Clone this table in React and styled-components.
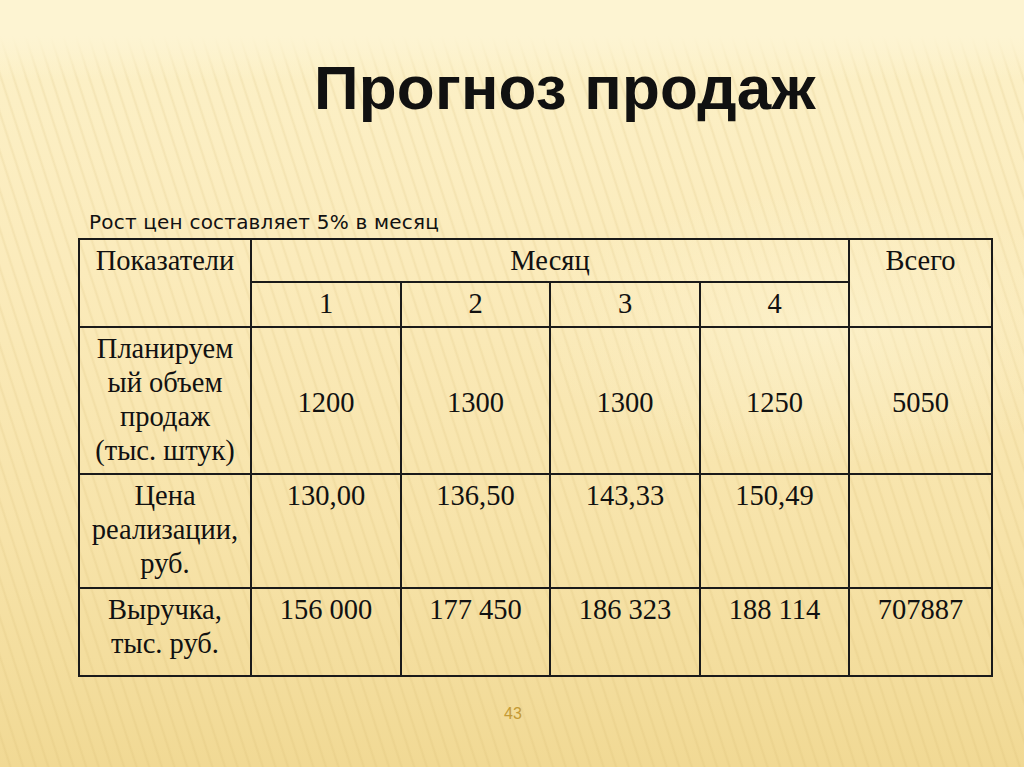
import styled, { createGlobalStyle } from "styled-components"

const GlobalStyle = createGlobalStyle`
  html, body {
    margin: 0;
    padding: 0;
  }
  body {
    background: #fbeec2;
  }
`

const months = ["1", "2", "3", "4"]

const rows = [
  {
    label: ["Планируем", "ый объем", "продаж", "(тыс. штук)"],
    values: ["1200", "1300", "1300", "1250"],
    total: "5050",
    middle: true,
  },
  {
    label: ["Цена", "реализации,", "руб."],
    values: ["130,00", "136,50", "143,33", "150,49"],
    total: "",
  },
  {
    label: ["Выручка,", "тыс. руб."],
    values: ["156 000", "177 450", "186 323", "188 114"],
    total: "707887",
  },
]

const App = () => {
  return (
    <Slide>
      <GlobalStyle />
      <Title>Прогноз продаж</Title>
      <Note>Рост цен составляет 5% в месяц</Note>

      <Table>
        <colgroup>
          <col style={{ width: 172 }} />
          <col style={{ width: 150 }} />
          <col style={{ width: 149 }} />
          <col style={{ width: 150 }} />
          <col style={{ width: 149 }} />
          <col style={{ width: 143 }} />
        </colgroup>
        <tbody>
          <Row h={43}>
            <Cell rowSpan={2}>Показатели</Cell>
            <Cell colSpan={4}>Месяц</Cell>
            <Cell rowSpan={2}>Всего</Cell>
          </Row>
          <Row h={45}>
            {months.map(m => <Cell key={m}>{m}</Cell>)}
          </Row>
          {rows.map((r, i) => (
            <Row key={i} h={[147, 114, 88][i]}>
              <Cell>{r.label.map((l, j) => <Line key={j}>{l}</Line>)}</Cell>
              {r.values.map((v, j) => <Cell key={j} $middle={r.middle}>{v}</Cell>)}
              <Cell $middle={r.middle}>{r.total}</Cell>
            </Row>
          ))}
        </tbody>
      </Table>

      <PageNum>43</PageNum>
    </Slide>
  )
}

const Slide = styled.div`
  position: relative;
  width: 1024px;
  height: 767px;
  overflow: hidden;
  box-sizing: border-box;
  padding-top: 52px;
  display: flex;
  flex-direction: column;
  background:
    linear-gradient(180deg, #fdf4d2 0px, #fdf4d2 36px, rgba(253, 244, 210, 0) 80px),
    radial-gradient(ellipse 420px 200px at 820px 330px, rgba(255, 250, 225, 0.4), rgba(255, 250, 225, 0) 70%),
    repeating-linear-gradient(72deg, rgba(205, 175, 100, 0) 0px, rgba(205, 175, 100, 0) 8px, rgba(205, 175, 100, 0.16) 10px, rgba(205, 175, 100, 0) 12px),
    linear-gradient(180deg, #fdf4d2 0%, #fcf0c6 8%, #fbebbb 35%, #f7e3a9 70%, #f1d994 100%);
`

const Title = styled.h1`
  margin: 0 0 0 314px;
  font-family: "Liberation Sans", Arial, sans-serif;
  font-weight: 700;
  font-size: 62px;
  line-height: 72px;
  color: #111;
  letter-spacing: 0.2px;
`

const Note = styled.div`
  margin: 86px 0 0 89px;
  font-family: "DejaVu Sans", sans-serif;
  font-size: 20px;
  line-height: 24px;
  letter-spacing: 0.2px;
  color: #111;
`

const Table = styled.table`
  margin: 4px 0 0 78px;
  width: 913px;
  table-layout: fixed;
  border-collapse: collapse;
  font-family: "Liberation Serif", "Times New Roman", serif;
  font-size: 28.5px;
  line-height: 34px;
  color: #111;
`

const Row = styled.tr`
  height: ${p => p.h}px;
`

const Cell = styled.td`
  border: 2px solid #1a1a1a;
  padding: 4px 3px 0;
  text-align: center;
  vertical-align: ${p => (p.$middle ? "middle" : "top")};
`

const Line = styled.div`
  white-space: nowrap;
`

const PageNum = styled.div`
  position: absolute;
  left: 0;
  right: 0;
  top: 705px;
  margin-left: 2px;
  text-align: center;
  font-family: "Liberation Sans", Arial, sans-serif;
  font-size: 16px;
  color: #c49a35;
`

export default App
